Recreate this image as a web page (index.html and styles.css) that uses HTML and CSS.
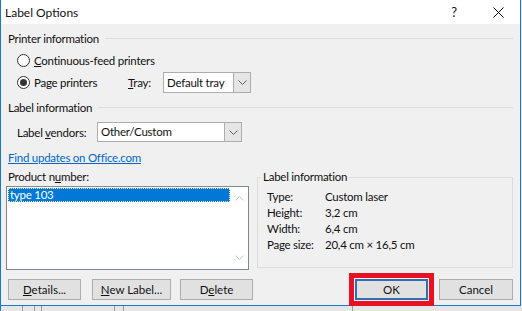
FILE: index.html
```html
<!DOCTYPE html>
<html lang="en">
<head>
<meta charset="UTF-8" />
<title>Label Options</title>
<link rel="stylesheet" href="styles.css">
</head>
<body>
  <div class="dialog">
    <div class="titlebar">
      <span class="title">Label Options</span>
      <span class="tbtn help">?</span>
      <span class="tbtn">
        <svg width="11" height="11" viewBox="0 0 11 11"><path d="M0.5 0.5L10.5 10.5M10.5 0.5L0.5 10.5" stroke="#000" stroke-width="1" fill="none"/></svg>
      </span>
    </div>

    <div class="content">
      <div class="group-head"><span>Printer information</span><i></i></div>
      <div class="row first">
        <label class="radio"><span class="circle"></span><span><u>C</u>ontinuous-feed printers</span></label>
      </div>
      <div class="row">
        <label class="radio page"><span class="circle checked"></span><span>Pa<u>g</u>e printers</span></label>
        <span class="tray-label"><u>T</u>ray:</span>
        <div class="select tray">
          <span class="value">Default tray</span>
          <span class="arrow"><svg width="9" height="5" viewBox="0 0 9 5"><path d="M0.5 0.5L4.5 4.5L8.5 0.5" stroke="#606060" fill="none"/></svg></span>
        </div>
      </div>

      <div class="group-head second"><span>Label information</span><i></i></div>
      <div class="row vendors">
        <span class="vendor-label">Label <u>v</u>endors:</span>
        <div class="select vendor">
          <span class="value">Other/Custom</span>
          <span class="arrow"><svg width="9" height="5" viewBox="0 0 9 5"><path d="M0.5 0.5L4.5 4.5L8.5 0.5" stroke="#606060" fill="none"/></svg></span>
        </div>
      </div>
      <a href="#" class="link">Find updates on Office.com</a>

      <div class="columns">
        <div class="left">
          <div class="list-label">Product n<u>u</u>mber:</div>
          <div class="listbox">
            <div class="items">
              <div class="item selected">type 103</div>
            </div>
            <div class="scroll">
              <svg width="9" height="5" viewBox="0 0 9 5"><path d="M0.5 4.5L4.5 0.5L8.5 4.5" stroke="#c4c4c4" fill="none"/></svg>
              <svg width="9" height="5" viewBox="0 0 9 5"><path d="M0.5 0.5L4.5 4.5L8.5 0.5" stroke="#c4c4c4" fill="none"/></svg>
            </div>
          </div>
        </div>
        <fieldset class="info">
          <legend>Label information</legend>
          <div class="info-grid">
            <span>Type:</span><span>Custom laser</span>
            <span>Height:</span><span>3,2 cm</span>
            <span>Width:</span><span>6,4 cm</span>
            <span>Page size:</span><span>20,4 cm × 16,5 cm</span>
          </div>
        </fieldset>
      </div>

      <div class="buttons">
        <div class="btn-group">
          <button class="btn details"><u>D</u>etails...</button>
          <button class="btn newlabel"><u>N</u>ew Label...</button>
          <button class="btn delete">D<u>e</u>lete</button>
        </div>
        <div class="btn-group right">
          <button class="btn ok">OK</button>
          <button class="btn cancel">Cancel</button>
        </div>
      </div>
    </div>
  </div>
  <div class="strip">
    <i style="margin-left:21px"></i><i style="margin-left:11px"></i><i style="margin-left:6px"></i><i style="margin-left:72px"></i><i style="margin-left:8px"></i><i style="margin-left:228px"></i>
  </div>
</body>
</html>
```

FILE: styles.css
```css
* {
  box-sizing: border-box;
}
body {
  margin: 0;
  width: 522px;
  height: 311px;
  overflow: hidden;
  background: #e6e6e6;
  font-family: Lato, "Noto Sans", sans-serif;
  font-size: 11.5px;
  letter-spacing: -0.25px;
  color: #111;
}
.dialog {
  width: 521px;
  height: 306px;
  background: #f0f0f0;
  border-left: 1px solid #1a78c8;
  border-right: 1px solid #1a78c8;
  border-bottom: 1px solid #1a78c8;
}
.titlebar {
  height: 24px;
  background: #fff;
  display: flex;
  align-items: center;
  padding-left: 4px;
}
.title {
  flex: 1;
  font-size: 12px;
  letter-spacing: 0;
}
.tbtn {
  width: 44px;
  height: 24px;
  display: flex;
  align-items: center;
  justify-content: center;
}
.help {
  font-size: 13px;
}
.content {
  padding: 7px 7px 0 5px;
}
.group-head {
  display: flex;
  align-items: center;
  height: 14px;
  padding-left: 2px;
}
.group-head i {
  flex: 1;
  border-top: 1px solid #dcdcdc;
  margin-left: 6px;
}
.group-head.second {
  margin-top: 7px;
}
.row {
  display: flex;
  align-items: center;
  height: 22px;
  padding-left: 11px;
}
.row.first {
  margin-top: 4px;
}
.radio {
  display: flex;
  align-items: center;
  gap: 4px;
}
.radio.page {
  width: 111px;
}
.circle {
  width: 13px;
  height: 13px;
  border: 1px solid #333;
  border-radius: 50%;
  background: #fff;
  display: flex;
  align-items: center;
  justify-content: center;
}
.circle.checked::after {
  content: "";
  width: 7px;
  height: 7px;
  border-radius: 50%;
  background: #333;
}
.tray-label {
  width: 35px;
}
.select {
  display: flex;
  height: 21px;
  border: 1px solid #adadad;
  background: #fff;
}
.select .value {
  flex: 1;
  padding-left: 3px;
  line-height: 19px;
}
.select .arrow {
  width: 17px;
  background: #e5e5e5;
  border-left: 1px solid #adadad;
  display: flex;
  align-items: center;
  justify-content: center;
}
.select.tray {
  width: 88px;
}
.row.vendors {
  margin-top: 8px;
  height: 20px;
}
.vendor-label {
  width: 80px;
}
.select.vendor {
  width: 145px;
  height: 20px;
}
.select.vendor .value {
  line-height: 18px;
}
.link {
  display: block;
  margin-top: 9px;
  padding-left: 2px;
  line-height: 14px;
  color: #0066cc;
}
.columns {
  display: flex;
  margin-top: 5px;
}
.left {
  width: 244px;
}
.list-label {
  line-height: 14px;
  padding-left: 2px;
}
.listbox {
  margin-top: 2px;
  height: 84px;
  border: 1px solid #828790;
  background: #fff;
  display: flex;
  padding: 1px 0 1px 1px;
}
.items {
  flex: 1;
  margin-right: 1px;
}
.item.selected {
  height: 14px;
  line-height: 13px;
  padding-left: 2px;
  background: #0078d7;
  color: #fff;
  outline: 1px dotted #f5e9a8;
  outline-offset: -1px;
}
.scroll {
  width: 17px;
  display: flex;
  flex-direction: column;
  justify-content: space-between;
  align-items: center;
  padding: 8px 0 8px;
}
.info {
  margin: 0 0 0 8px;
  width: 257px;
  height: 98px;
  border: 1px solid #dcdcdc;
  padding: 5px 0 0 3px;
}
.info legend {
  padding: 0 2px;
  line-height: 14px;
}
.info-grid {
  display: grid;
  grid-template-columns: 58px auto;
  grid-auto-rows: 16px;
  line-height: 16px;
  margin-left: 6px;
}
.buttons {
  display: flex;
  justify-content: space-between;
  margin-top: 9px;
  padding-left: 2px;
}
.btn-group {
  display: flex;
}
.btn {
  height: 21px;
  padding: 0;
  border: 1px solid #adadad;
  background: #e1e1e1;
  font: inherit;
  color: #111;
  text-align: center;
}
.details {
  width: 73px;
}
.newlabel {
  width: 79px;
  margin-left: 11px;
}
.delete {
  width: 73px;
  margin-left: 9px;
}
.ok {
  width: 73px;
  border: 2px solid #2f6fae;
  outline: 5px solid #e81123;
  outline-offset: 1px;
}
.cancel {
  width: 74px;
  margin-left: 11px;
}
.strip {
  display: flex;
  height: 5px;
  border-left: 1px solid #1a78c8;
}
.strip i {
  width: 1px;
  background: #9a9a9a;
}
```
